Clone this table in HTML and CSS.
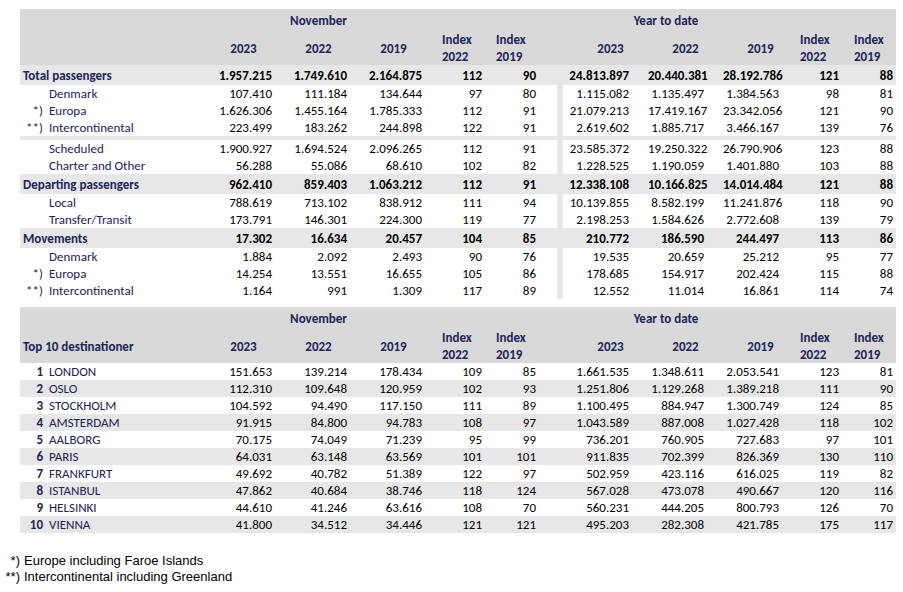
FILE: index.html
```html
<!DOCTYPE html>
<html lang="en">
<head>
<meta charset="utf-8">
<title>Passenger statistics November</title>
<link rel="stylesheet" href="styles.css">
</head>
<body>
<div class="page">
  <section class="tbl">
    <div class="hdr">
      <div class="h-period h-nov">November</div>
      <div class="h-period h-ytd">Year to date</div>
      <div class="h-lbl"></div>
      <div class="h-yr c2">2023</div>
      <div class="h-yr c3">2022</div>
      <div class="h-yr c4">2019</div>
      <div class="h-ix c5">Index<br>2022</div>
      <div class="h-ix c6">Index<br>2019</div>
      <div class="h-gap"></div>
      <div class="h-yr c8">2023</div>
      <div class="h-yr c9">2022</div>
      <div class="h-yr c10">2019</div>
      <div class="h-ix c11">Index<br>2022</div>
      <div class="h-ix c12">Index<br>2019</div>
    </div>

    <div class="row tot"><div class="lbl">Total passengers</div><div>1.957.215</div><div>1.749.610</div><div>2.164.875</div><div>112</div><div>90</div><div></div><div>24.813.897</div><div>20.440.381</div><div>28.192.786</div><div>121</div><div>88</div></div>
    <div class="row sub"><div class="lbl"><span class="pre"></span>Denmark</div><div>107.410</div><div>111.184</div><div>134.644</div><div>97</div><div>80</div><div></div><div>1.115.082</div><div>1.135.497</div><div>1.384.563</div><div>98</div><div>81</div></div>
    <div class="row sub"><div class="lbl"><span class="pre">*)</span>Europa</div><div>1.626.306</div><div>1.455.164</div><div>1.785.333</div><div>112</div><div>91</div><div></div><div>21.079.213</div><div>17.419.167</div><div>23.342.056</div><div>121</div><div>90</div></div>
    <div class="row sub"><div class="lbl"><span class="pre">**)</span>Intercontinental</div><div>223.499</div><div>183.262</div><div>244.898</div><div>122</div><div>91</div><div></div><div>2.619.602</div><div>1.885.717</div><div>3.466.167</div><div>139</div><div>76</div></div>
    <div class="sep"></div>
    <div class="row sub"><div class="lbl"><span class="pre"></span>Scheduled</div><div>1.900.927</div><div>1.694.524</div><div>2.096.265</div><div>112</div><div>91</div><div></div><div>23.585.372</div><div>19.250.322</div><div>26.790.906</div><div>123</div><div>88</div></div>
    <div class="row sub"><div class="lbl"><span class="pre"></span>Charter and Other</div><div>56.288</div><div>55.086</div><div>68.610</div><div>102</div><div>82</div><div></div><div>1.228.525</div><div>1.190.059</div><div>1.401.880</div><div>103</div><div>88</div></div>
    <div class="row tot"><div class="lbl">Departing passengers</div><div>962.410</div><div>859.403</div><div>1.063.212</div><div>112</div><div>91</div><div></div><div>12.338.108</div><div>10.166.825</div><div>14.014.484</div><div>121</div><div>88</div></div>
    <div class="row sub"><div class="lbl"><span class="pre"></span>Local</div><div>788.619</div><div>713.102</div><div>838.912</div><div>111</div><div>94</div><div></div><div>10.139.855</div><div>8.582.199</div><div>11.241.876</div><div>118</div><div>90</div></div>
    <div class="row sub"><div class="lbl"><span class="pre"></span>Transfer/Transit</div><div>173.791</div><div>146.301</div><div>224.300</div><div>119</div><div>77</div><div></div><div>2.198.253</div><div>1.584.626</div><div>2.772.608</div><div>139</div><div>79</div></div>
    <div class="row tot"><div class="lbl">Movements</div><div>17.302</div><div>16.634</div><div>20.457</div><div>104</div><div>85</div><div></div><div>210.772</div><div>186.590</div><div>244.497</div><div>113</div><div>86</div></div>
    <div class="row sub"><div class="lbl"><span class="pre"></span>Denmark</div><div>1.884</div><div>2.092</div><div>2.493</div><div>90</div><div>76</div><div></div><div>19.535</div><div>20.659</div><div>25.212</div><div>95</div><div>77</div></div>
    <div class="row sub"><div class="lbl"><span class="pre">*)</span>Europa</div><div>14.254</div><div>13.551</div><div>16.655</div><div>105</div><div>86</div><div></div><div>178.685</div><div>154.917</div><div>202.424</div><div>115</div><div>88</div></div>
    <div class="row sub"><div class="lbl"><span class="pre">**)</span>Intercontinental</div><div>1.164</div><div>991</div><div>1.309</div><div>117</div><div>89</div><div></div><div>12.552</div><div>11.014</div><div>16.861</div><div>114</div><div>74</div></div>
  </section>

  <section class="tbl dest">
    <div class="hdr">
      <div class="h-period h-nov">November</div>
      <div class="h-period h-ytd">Year to date</div>
      <div class="h-lbl">Top 10 destinationer</div>
      <div class="h-yr c2">2023</div>
      <div class="h-yr c3">2022</div>
      <div class="h-yr c4">2019</div>
      <div class="h-ix c5">Index<br>2022</div>
      <div class="h-ix c6">Index<br>2019</div>
      <div class="h-gap"></div>
      <div class="h-yr c8">2023</div>
      <div class="h-yr c9">2022</div>
      <div class="h-yr c10">2019</div>
      <div class="h-ix c11">Index<br>2022</div>
      <div class="h-ix c12">Index<br>2019</div>
    </div>
    <div class="row"><div class="lbl"><span class="pre rank">1</span>LONDON</div><div>151.653</div><div>139.214</div><div>178.434</div><div>109</div><div>85</div><div></div><div>1.661.535</div><div>1.348.611</div><div>2.053.541</div><div>123</div><div>81</div></div>
    <div class="row"><div class="lbl"><span class="pre rank">2</span>OSLO</div><div>112.310</div><div>109.648</div><div>120.959</div><div>102</div><div>93</div><div></div><div>1.251.806</div><div>1.129.268</div><div>1.389.218</div><div>111</div><div>90</div></div>
    <div class="row"><div class="lbl"><span class="pre rank">3</span>STOCKHOLM</div><div>104.592</div><div>94.490</div><div>117.150</div><div>111</div><div>89</div><div></div><div>1.100.495</div><div>884.947</div><div>1.300.749</div><div>124</div><div>85</div></div>
    <div class="row"><div class="lbl"><span class="pre rank">4</span>AMSTERDAM</div><div>91.915</div><div>84.800</div><div>94.783</div><div>108</div><div>97</div><div></div><div>1.043.589</div><div>887.008</div><div>1.027.428</div><div>118</div><div>102</div></div>
    <div class="row"><div class="lbl"><span class="pre rank">5</span>AALBORG</div><div>70.175</div><div>74.049</div><div>71.239</div><div>95</div><div>99</div><div></div><div>736.201</div><div>760.905</div><div>727.683</div><div>97</div><div>101</div></div>
    <div class="row"><div class="lbl"><span class="pre rank">6</span>PARIS</div><div>64.031</div><div>63.148</div><div>63.569</div><div>101</div><div>101</div><div></div><div>911.835</div><div>702.399</div><div>826.369</div><div>130</div><div>110</div></div>
    <div class="row"><div class="lbl"><span class="pre rank">7</span>FRANKFURT</div><div>49.692</div><div>40.782</div><div>51.389</div><div>122</div><div>97</div><div></div><div>502.959</div><div>423.116</div><div>616.025</div><div>119</div><div>82</div></div>
    <div class="row"><div class="lbl"><span class="pre rank">8</span>ISTANBUL</div><div>47.862</div><div>40.684</div><div>38.746</div><div>118</div><div>124</div><div></div><div>567.028</div><div>473.078</div><div>490.667</div><div>120</div><div>116</div></div>
    <div class="row"><div class="lbl"><span class="pre rank">9</span>HELSINKI</div><div>44.610</div><div>41.246</div><div>63.616</div><div>108</div><div>70</div><div></div><div>560.231</div><div>444.205</div><div>800.793</div><div>126</div><div>70</div></div>
    <div class="row"><div class="lbl"><span class="pre rank">10</span>VIENNA</div><div>41.800</div><div>34.512</div><div>34.446</div><div>121</div><div>121</div><div></div><div>495.203</div><div>282.308</div><div>421.785</div><div>175</div><div>117</div></div>
  </section>

  <div class="notes">
    <p><span class="mark">*)</span>Europe including Faroe Islands</p>
    <p><span class="mark">**)</span>Intercontinental including Greenland</p>
  </div>
</div>
</body>
</html>
```

FILE: styles.css
```css
html, body {
  margin: 0;
  padding: 0;
  background: #ffffff;
}

.page {
  padding: 9px 7px 0 20px;
  font-family: Calibri, Carlito, Lato, "Open Sans", sans-serif;
  font-size: 13px;
  color: #000;
}

.tbl {
  width: 876px;
  --cols: 186px 75px 75px 75px 55px 71px 6px 85px 75px 75px 45px 53px;
}

.tbl + .tbl {
  margin-top: 8px;
}

.hdr {
  display: grid;
  grid-template-columns: var(--cols);
  grid-template-rows: 22px 34px;
  background: #d9d9d9;
  color: #1b2558;
  font-weight: 700;
}

.h-period {
  grid-row: 1;
  display: flex;
  align-items: center;
  justify-content: center;
  padding-top: 1px;
}

.h-nov { grid-column: 2 / 5; }
.h-ytd { grid-column: 8 / 11; padding-right: 29px; }

.h-lbl {
  grid-row: 2;
  grid-column: 1;
  display: flex;
  align-items: center;
  padding-left: 3px;
}

.h-yr {
  grid-row: 2;
  display: flex;
  align-items: center;
  justify-content: center;
}

.h-ix {
  grid-row: 2;
  line-height: 17px;
  white-space: nowrap;
}

.h-gap { grid-row: 2; grid-column: 7; }

.c2 { grid-column: 2; }
.c3 { grid-column: 3; }
.c4 { grid-column: 4; }
.c5 { grid-column: 5; padding-left: 11px; }
.c6 { grid-column: 6; padding-left: 10px; }
.c8 { grid-column: 8; padding-left: 10px; }
.c9 { grid-column: 9; }
.c10 { grid-column: 10; }
.c11 { grid-column: 11; padding-left: 2px; }
.c12 { grid-column: 12; padding-left: 11px; }

.row {
  display: grid;
  grid-template-columns: var(--cols);
  box-sizing: border-box;
  height: 17px;
  line-height: 16px;
  white-space: nowrap;
}

.row > div {
  text-align: right;
  padding-top: 1px;
}

.row > div:nth-child(2),
.row > div:nth-child(3),
.row > div:nth-child(4) { padding-right: 9px; }
.row > div:nth-child(5) { padding-right: 4px; }
.row > div:nth-child(6) { padding-right: 21px; }
.row > div:nth-child(8),
.row > div:nth-child(9),
.row > div:nth-child(10) { padding-right: 19px; }
.row > div:nth-child(11) { padding-right: 4px; }
.row > div:nth-child(12) { padding-right: 3px; }

.row > .lbl {
  text-align: left;
  color: #1b2558;
}

.pre {
  display: inline-block;
  width: 23px;
  margin-right: 6px;
  text-align: right;
}

.rank { font-weight: 700; }

.tot {
  height: 20px;
  line-height: 19px;
  background: #e7e7e7;
  font-weight: 700;
}

.tot > .lbl { padding-left: 3px; }

.sub > div:nth-child(7) { background: #e7e7e7; }

.sep {
  height: 4px;
  background: #e7e7e7;
}

.dest .row:nth-of-type(odd) { background: #e7e7e7; }

.notes {
  margin: 20px 0 0 -16px;
  font-family: "Liberation Sans", Arial, sans-serif;
  font-size: 13px;
  line-height: 16px;
}

.notes p {
  margin: 0;
}

.mark {
  display: inline-block;
  width: 16px;
  margin-right: 4px;
  text-align: right;
}
```
